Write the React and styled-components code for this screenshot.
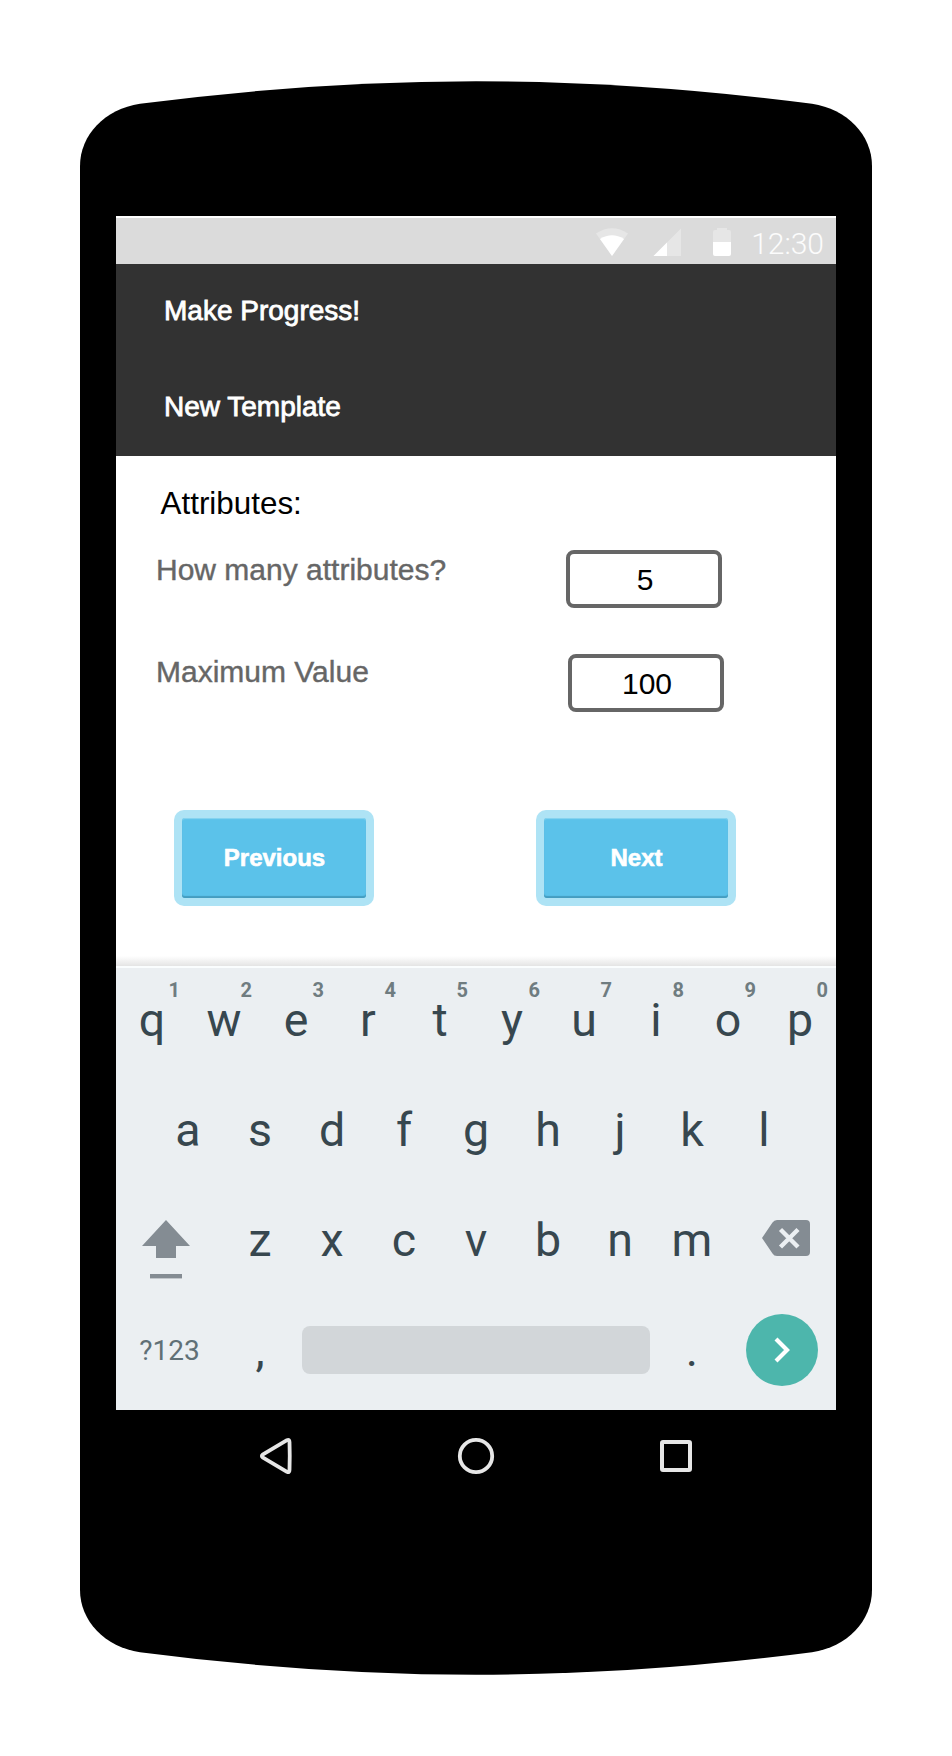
import React from "react";
import styled, { createGlobalStyle } from "styled-components";

const GlobalStyle = createGlobalStyle`
  * { box-sizing: border-box; }
  body { margin: 0; background: #fff; }
  button, input { font: inherit; margin: 0; padding: 0; border: 0; background: none; }
  svg { display: block; flex: none; }
`;

const Page = styled.main`
  padding: 81px 80px;
  font-family: "Liberation Sans", Arial, sans-serif;
`;

const Phone = styled.div`
  width: 792px;
  height: 1594px;
  padding: 135px 36px 0;
  background: #000;
  clip-path: path("M0 85 C0 54 25 28 60 22.8 Q233 0.3 396 0.3 Q559 0.3 732 22.8 C767 28 792 54 792 85 V1509 C792 1540 767 1566 732 1571.2 Q559 1593.700 396 1593.700 Q233 1593.700 60 1571.2 C25 1566 0 1540 0 1509 Z");
`;

const Screen = styled.div`
  display: flex;
  flex-direction: column;
  height: 1194px;
  background: #fff;
`;

const StatusBar = styled.div`
  display: flex;
  align-items: center;
  justify-content: flex-end;
  height: 46px;
  margin-top: 2px;
  padding-right: 12px;
  background: #dbdbdb;
`;

const StatusIcon = styled.svg`
  margin-right: ${(p) => p.$gap}px;
  margin-top: 2px;
`;

const Clock = styled.span`
  padding-top: 5px;
  color: #fcfcfc;
  font: 300 30px/40px Roboto, sans-serif;
`;

const Header = styled.header`
  height: 192px;
  background: #323232;
`;

const Title = styled.h1`
  height: 96px;
  margin: 0;
  padding: 0 0 2px 48px;
  color: #fff;
  font-size: 28px;
  font-weight: 400;
  line-height: 93px;
  -webkit-text-stroke: 0.8px #fff;
`;

const Content = styled.section`
  height: 510px;
  padding-top: 30px;
  background: linear-gradient(to top, #e4e4e4, #fff 10px);
`;

const Heading = styled.h2`
  margin: 0 0 28px 44.5px;
  color: #000;
  font-size: 31.4px;
  font-weight: 400;
  line-height: 36px;
`;

const Field = styled.label`
  display: flex;
  justify-content: space-between;
  height: 58px;
  margin-bottom: ${(p) => p.$after}px;
  padding: 0 ${(p) => p.$right}px 0 40px;
`;

const FieldName = styled.span`
  padding-top: ${(p) => p.$drop || 0}px;
  color: #666;
  font-size: 30px;
  line-height: 36px;
  -webkit-text-stroke: 0.4px #666;
`;

const NumberInput = styled.input`
  width: 156px;
  height: 58px;
  padding: 1px 0 0 2px;
  border: 4px solid #666;
  border-radius: 8px;
  background: #fff;
  color: #000;
  font-size: 30px;
  text-align: center;
  outline: none;
`;

const Actions = styled.div`
  display: flex;
  justify-content: space-between;
  padding: 0 100px 0 58px;
`;

const ActionButton = styled.button`
  width: 200px;
  height: 96px;
  padding: 8px;
  border-radius: 10px;
  background: #aee3f5;
`;

const ButtonFace = styled.span`
  display: block;
  height: 80px;
  padding-left: 1px;
  border-radius: 3px;
  background: #5bc2ea;
  box-shadow: inset 0 -2px 1px #449dc0, inset 0 1px 1px #8ad5f0;
  color: #fff;
  font-size: 24px;
  font-weight: 700;
  line-height: 79px;
  -webkit-text-stroke: 0.6px #fff;
`;

const Keyboard = styled.div`
  height: 444px;
  padding-bottom: 2px;
  border-top: 2px solid #fafdfe;
  background: #ebeff2;
`;

const KeyRow = styled.div`
  display: flex;
  justify-content: center;
  height: 110px;
`;

const Key = styled.button`
  position: relative;
  display: flex;
  align-items: center;
  justify-content: center;
  width: ${(p) => p.$width || 72}px;
  height: 104px;
  padding-left: ${(p) => p.$nudge || 0}px;
  color: ${(p) => (p.$small ? "#607076" : "#37474f")};
  font-family: Roboto, sans-serif;
  font-size: ${(p) => (p.$small ? 28 : 46.5)}px;
`;

const KeyHint = styled.sup`
  position: absolute;
  top: 12px;
  right: 8px;
  color: #6f7c80;
  font-size: 20px;
  font-weight: 700;
  line-height: 20px;
`;

const ShiftIcon = styled.svg`
  margin: 18px 0 0 0;
  overflow: visible;
`;

const DeleteIcon = styled.svg`
  margin: -4px 0 0 0;
`;

const SpaceBar = styled.span`
  width: 348px;
  height: 48px;
  border-radius: 8px;
  background: #d2d6d9;
`;

const GoCircle = styled.span`
  display: flex;
  align-items: center;
  justify-content: center;
  width: 72px;
  height: 72px;
  border-radius: 50%;
  background: #4db6ac;
`;

const NavBar = styled.nav`
  display: flex;
  justify-content: space-between;
  padding: 26px 142px 0;
`;

function LetterKey({ letter, hint }) {
  return (
    <Key>
      {letter}
      {hint && <KeyHint>{hint}</KeyHint>}
    </Key>
  );
}

export default function App() {
  return (
    <Page>
      <GlobalStyle />
      <Phone>
        <Screen>
          <StatusBar>
            <StatusIcon $gap={25} width="32" height="28">
              <path d="M0 5.5Q16-5 32 5.5L16 28Z" fill="#e6e6e6" />
              <path d="M4 11Q16 3.5 28 11L16 28Z" fill="#fff" />
            </StatusIcon>
            <StatusIcon $gap={32} width="28" height="28">
              <path d="M0.500 28L28 0.500V28Z" fill="#e6e6e6" />
              <path d="M0.500 28L14 14.500V28Z" fill="#fff" />
            </StatusIcon>
            <StatusIcon $gap={20} width="18" height="28">
              <path d="M4 0H14V2H16Q18 2 18 4V14H0V4Q0 2 2 2H4Z" fill="#e6e6e6" />
              <path d="M0 14H18V26Q18 28 16 28H2Q0 28 0 26Z" fill="#fff" />
            </StatusIcon>
            <Clock>12:30</Clock>
          </StatusBar>

          <Header>
            <Title>Make Progress!</Title>
            <Title as="h2">New Template</Title>
          </Header>

          <Content>
            <Heading>Attributes:</Heading>
            <Field $right={114} $after={46}>
              <FieldName $drop={2}>How many attributes?</FieldName>
              <NumberInput readOnly value="5" />
            </Field>
            <Field $right={112} $after={98}>
              <FieldName>Maximum Value</FieldName>
              <NumberInput readOnly value="100" />
            </Field>
            <Actions>
              <ActionButton><ButtonFace>Previous</ButtonFace></ActionButton>
              <ActionButton><ButtonFace>Next</ButtonFace></ActionButton>
            </Actions>
          </Content>

          <Keyboard>
            <KeyRow>
              {[..."qwertyuiop"].map((c, i) => (
                <LetterKey key={c} letter={c} hint={String((i + 1) % 10)} />
              ))}
            </KeyRow>
            <KeyRow>
              {[..."asdfghjkl"].map((c) => <LetterKey key={c} letter={c} />)}
            </KeyRow>
            <KeyRow>
              <Key $width={100} aria-label="Shift">
                <ShiftIcon width="48" height="58" fill="#848c93">
                  <path d="M24 0L48 26H34V38H14V26H0Z" />
                  <path d="M8 54H40V58.4H8Z" />
                </ShiftIcon>
              </Key>
              <Key $width={8} as="span" />
              {[..."zxcvbnm"].map((c) => <LetterKey key={c} letter={c} />)}
              <Key $width={108} $nudge={8} aria-label="Delete">
                <DeleteIcon width="48" height="36">
                  <path d="M15 0H44Q48 0 48 4V32Q48 36 44 36H15Q12 36 10.500 33.500L0 18L10.500 2.500Q12 0 15 0Z" fill="#848c93" />
                  <path d="M18.500 9.500L36 27M36 9.500L18.500 27" stroke="#ebeff2" strokeWidth="4.4" />
                </DeleteIcon>
              </Key>
            </KeyRow>
            <KeyRow>
              <Key $width={107} $small>?123</Key>
              <Key $width={73} $nudge={1}>,</Key>
              <Key $width={360} aria-label="Space"><SpaceBar /></Key>
              <Key>.</Key>
              <Key $width={108} aria-label="Go">
                <GoCircle>
                  <svg width="18" height="28" fill="none" stroke="#fff" strokeWidth="4.2">
                    <path d="M3 3L14 14L3 25" />
                  </svg>
                </GoCircle>
              </Key>
            </KeyRow>
          </Keyboard>
        </Screen>

        <NavBar>
          <svg width="36" height="40" fill="none" stroke="#e6e6e6" strokeWidth="3.8" strokeLinejoin="round">
            <path d="M29 4.200Q31.500 3 31.500 6Q32 20 31.500 34Q31.500 37 29 35.800L4.600 21.300Q3.100 20 4.600 18.700Z" />
          </svg>
          <svg width="40" height="40" fill="none" stroke="#e6e6e6" strokeWidth="3.8">
            <circle cx="20" cy="20" r="16.200" />
          </svg>
          <svg width="36" height="40" fill="none" stroke="#e6e6e6" strokeWidth="4">
            <rect x="4" y="6" width="28" height="28" rx="1" />
          </svg>
        </NavBar>
      </Phone>
    </Page>
  );
}
